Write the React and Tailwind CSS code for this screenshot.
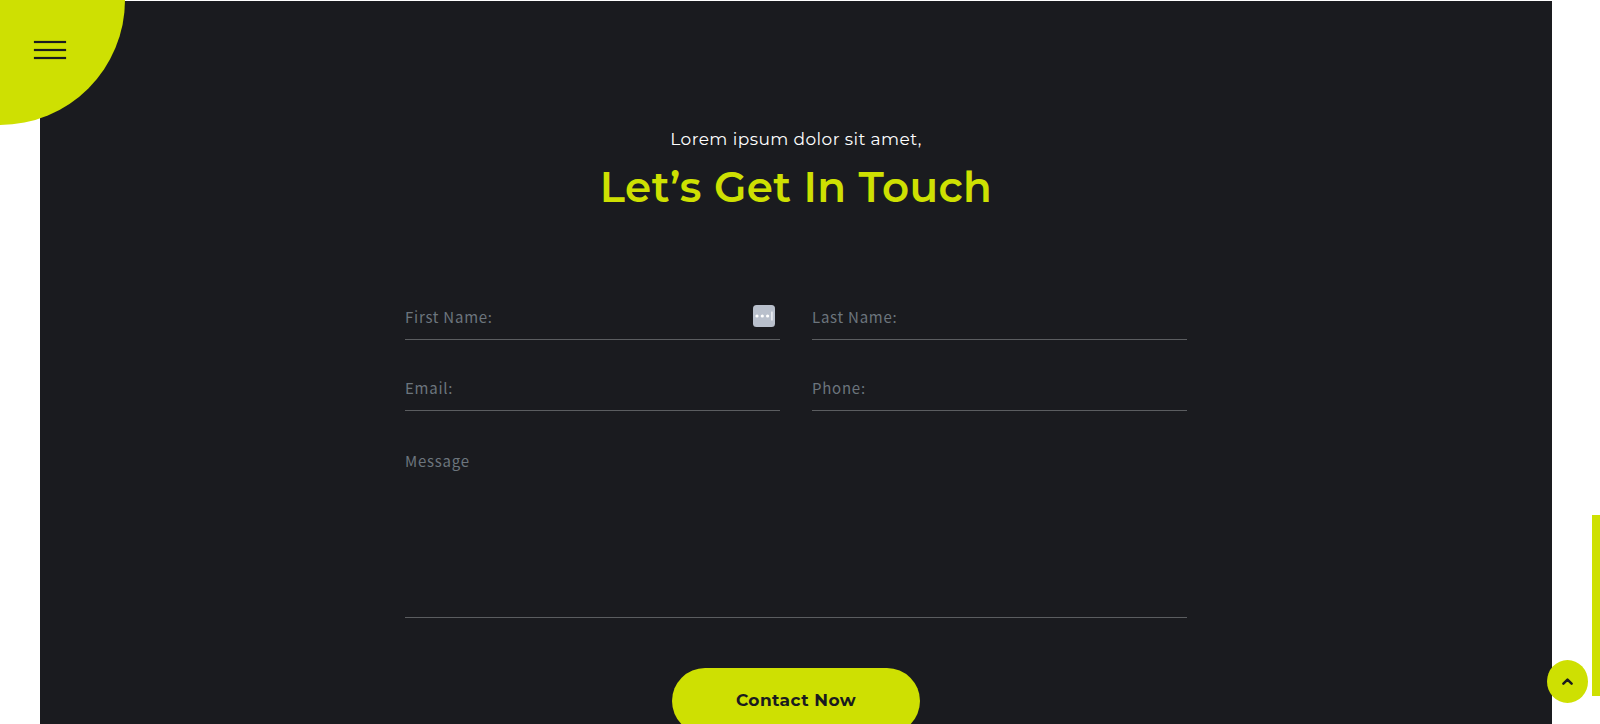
import React, { useState } from 'react';

const fields = [
  { id: 'firstName', label: 'First Name:', type: 'text', autofill: true },
  { id: 'lastName', label: 'Last Name:', type: 'text' },
  { id: 'email', label: 'Email:', type: 'email' },
  { id: 'phone', label: 'Phone:', type: 'tel' },
];

const inputClass =
  "block w-full bg-transparent border-b border-[#5b5d60] font-['Noto_Sans_CJK_SC',sans-serif] text-[15px] tracking-wider text-white placeholder:text-[#6c757d] placeholder:opacity-100 outline-none focus:border-[#cee002]";

const AutofillBadge = () => (
  <svg viewBox="0 0 22 22" className="absolute right-[5px] top-3 w-[22px] h-[22px]" aria-hidden="true">
    <rect x="0" y="0" width="22" height="22" rx="3.5" fill="#b9c0cc" />
    <circle cx="4" cy="11" r="1.6" fill="#fff" />
    <circle cx="9.3" cy="11" r="1.6" fill="#fff" />
    <circle cx="14.6" cy="11" r="1.6" fill="#fff" />
    <rect x="18" y="6.5" width="1.8" height="9" rx="0.5" fill="#e6e9ee" />
  </svg>
);

const App = () => {
  const [values, setValues] = useState({});

  const onChange = (e) => setValues({ ...values, [e.target.name]: e.target.value });

  return (
    <div className="flex h-screen overflow-hidden bg-white font-['Montserrat','Inter',sans-serif]">
      <main className="flex-1 px-10 pt-px">
        <section className="min-h-screen bg-[#1a1b1f] px-6 pt-[126px] pb-16">
          <header className="text-center">
            <p className="text-[17px] leading-6 tracking-wide text-white">Lorem ipsum dolor sit amet,</p>
            <h2 className="mt-2 text-[42px] leading-14 font-semibold tracking-[0.01em] text-[#cee002]">Let’s Get In Touch</h2>
          </header>

          <form className="mx-auto mt-[78px] w-full max-w-[782px]" onSubmit={(e) => e.preventDefault()}>
            <div className="grid grid-cols-2 gap-x-8 gap-y-6">
              {fields.map((f) => (
                <div key={f.id} className="relative">
                  <input
                    id={f.id}
                    name={f.id}
                    type={f.type}
                    aria-label={f.label}
                    placeholder={f.label}
                    value={values[f.id] || ''}
                    onChange={onChange}
                    className={`${inputClass} h-[47px] pt-px`}
                  />
                  {f.autofill && <AutofillBadge />}
                </div>
              ))}
            </div>
            <textarea
              id="message"
              name="message"
              aria-label="Message"
              placeholder="Message"
              value={values.message || ''}
              onChange={onChange}
              className={`${inputClass} mt-6 h-[183px] pt-[15px] resize-none`}
            />
            <div className="mt-[50px] text-center">
              <button type="submit" className="h-[66px] px-16 rounded-full bg-[#cee002] text-[17px] font-bold tracking-wide text-[#1a1b1f]">
                Contact Now
              </button>
            </div>
          </form>
        </section>
      </main>

      {/* custom scrollbar */}
      <div className="w-2 h-screen bg-white">
        <div className="h-[71.2%]" />
        <div className="h-1/4 bg-[#cee002]" />
      </div>

      <button
        type="button"
        aria-label="Open menu"
        className="fixed left-0 top-0 w-[125px] h-[125px] rounded-br-full bg-[#cee002] pl-[34px] pt-[41px] flex flex-col gap-[6px]"
      >
        <span className="block w-8 h-[2px] bg-[#1a1b1f] shadow-[0_0_1px_#1a1b1f]" />
        <span className="block w-8 h-[2px] bg-[#1a1b1f] shadow-[0_0_1px_#1a1b1f]" />
        <span className="block w-8 h-[2px] bg-[#1a1b1f] shadow-[0_0_1px_#1a1b1f]" />
      </button>

      <a
        href="#root"
        aria-label="Back to top"
        className="fixed right-3 bottom-[21px] w-[41px] h-[43px] rounded-[50%] bg-[#cee002] flex items-center justify-center"
      >
        <svg viewBox="0 0 11 7" className="w-[11px] h-[7px]" fill="none" stroke="#1a1b1f" strokeWidth="2.5">
          <path d="M1.4 5.6 L5.5 1.6 L9.6 5.6" strokeLinecap="round" strokeLinejoin="round" />
        </svg>
      </a>
    </div>
  );
};

export default App;
